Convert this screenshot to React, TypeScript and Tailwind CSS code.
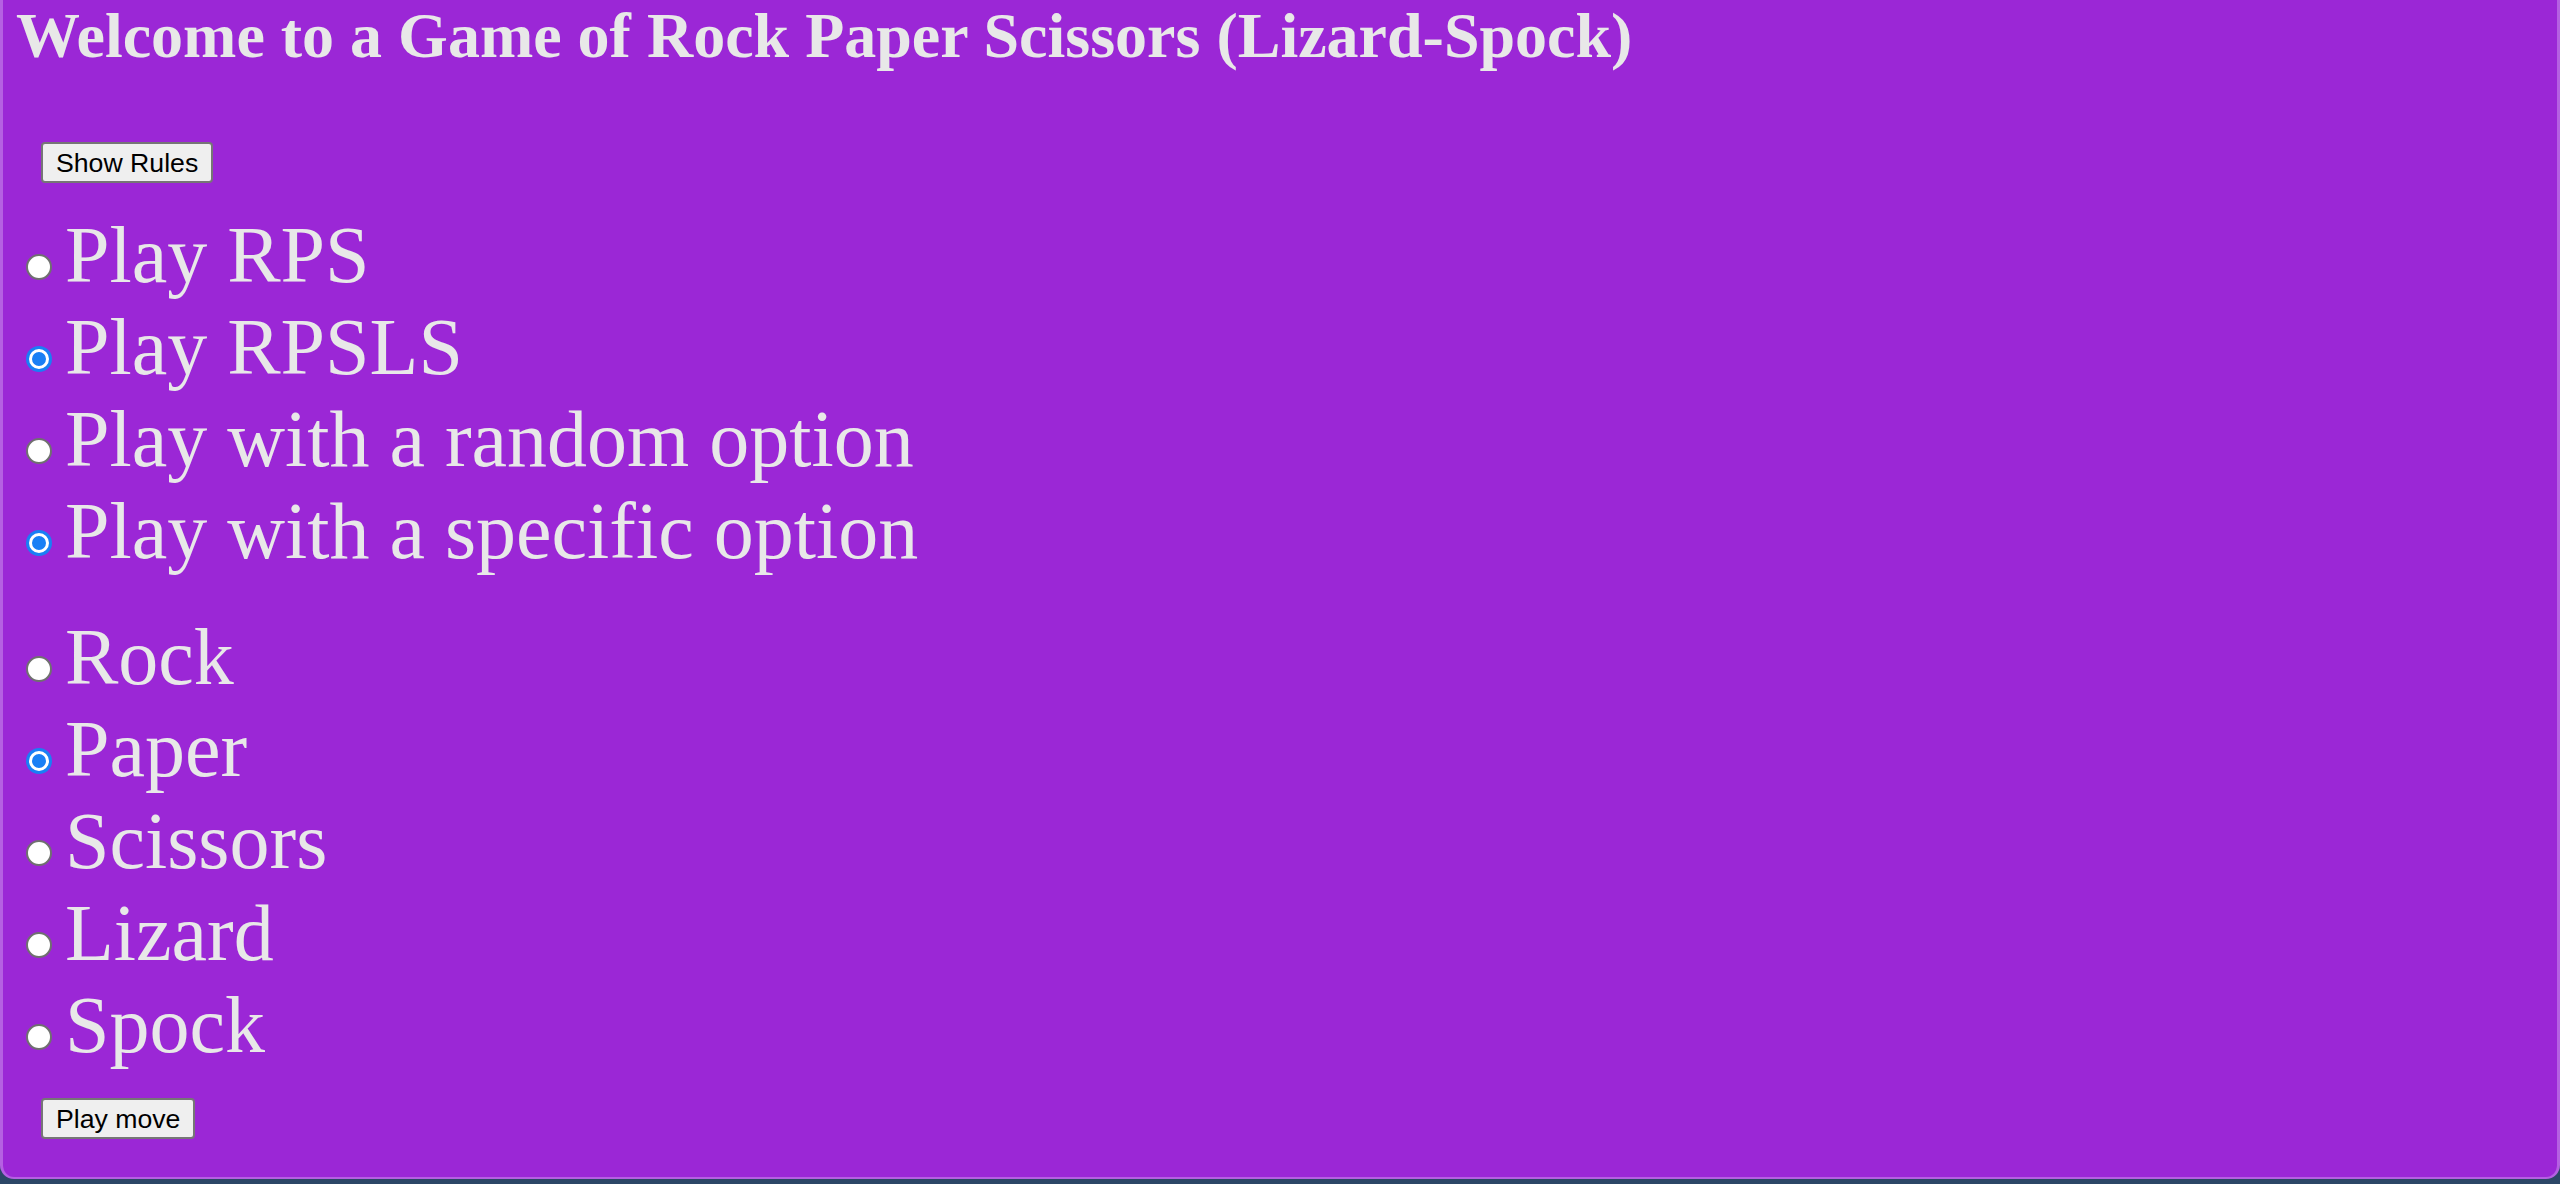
import { useState } from "react";

const modes = ["Play RPS", "Play RPSLS"];
const pickModes = ["Play with a random option", "Play with a specific option"];
const moves = ["Rock", "Paper", "Scissors", "Lizard", "Spock"];

function Radio({ checked }: { checked: boolean }) {
  if (checked) {
    return (
      <span className="mt-[43px] ml-[10px] mr-[13px] flex h-[26px] w-[26px] shrink-0 items-center justify-center rounded-full bg-[#1a7ff5]">
        <span className="h-[20px] w-[20px] rounded-full border-[3px] border-white bg-[#1a7ff5]" />
      </span>
    );
  }
  return (
    <span className="mt-[43px] ml-[10px] mr-[13px] h-[26px] w-[26px] shrink-0 rounded-full border-2 border-[#707070] bg-white" />
  );
}

function RadioRow({ label, checked, onClick }: { label: string; checked: boolean; onClick: () => void }) {
  return (
    <div className="flex h-[92px] cursor-default items-start" onClick={onClick}>
      <Radio checked={checked} />
      <span className="text-[80px] leading-[88px]">{label}</span>
    </div>
  );
}

export default function App() {
  const [mode, setMode] = useState(1);
  const [pick, setPick] = useState(1);
  const [move, setMove] = useState(1);

  return (
    <div className="h-[1184px] w-full overflow-hidden bg-[#2c4767]">
      <div className="h-[1179px] rounded-b-[14px] border-x-[3px] border-b-2 border-[#b560e2] bg-[#9b27d6] pl-[13px] font-['Liberation_Serif',serif] text-[#e8e8e8]">
        <h1 className="text-[64px] font-bold leading-[72px]">
          Welcome to a Game of Rock Paper Scissors (Lizard-Spock)
        </h1>

        <button className="mt-[70px] ml-[25px] flex h-[41px] items-center rounded-[4px] border-2 border-[#767676] bg-[#efefef] px-[13px] font-['Liberation_Sans',Arial,sans-serif] text-[26.67px] text-black">
          Show Rules
        </button>

        <div className="mt-[28px]">
          {modes.map((m, i) => (
            <RadioRow key={m} label={m} checked={mode === i} onClick={() => setMode(i)} />
          ))}
          {pickModes.map((m, i) => (
            <RadioRow key={m} label={m} checked={pick === i} onClick={() => setPick(i)} />
          ))}
        </div>

        <div className="mt-[34px]">
          {moves.map((m, i) => (
            <RadioRow key={m} label={m} checked={move === i} onClick={() => setMove(i)} />
          ))}
        </div>

        <button className="mt-[25px] ml-[25px] flex h-[41px] items-center rounded-[4px] border-2 border-[#767676] bg-[#efefef] px-[13px] font-['Liberation_Sans',Arial,sans-serif] text-[26.67px] text-black">
          Play move
        </button>
      </div>
    </div>
  );
}
